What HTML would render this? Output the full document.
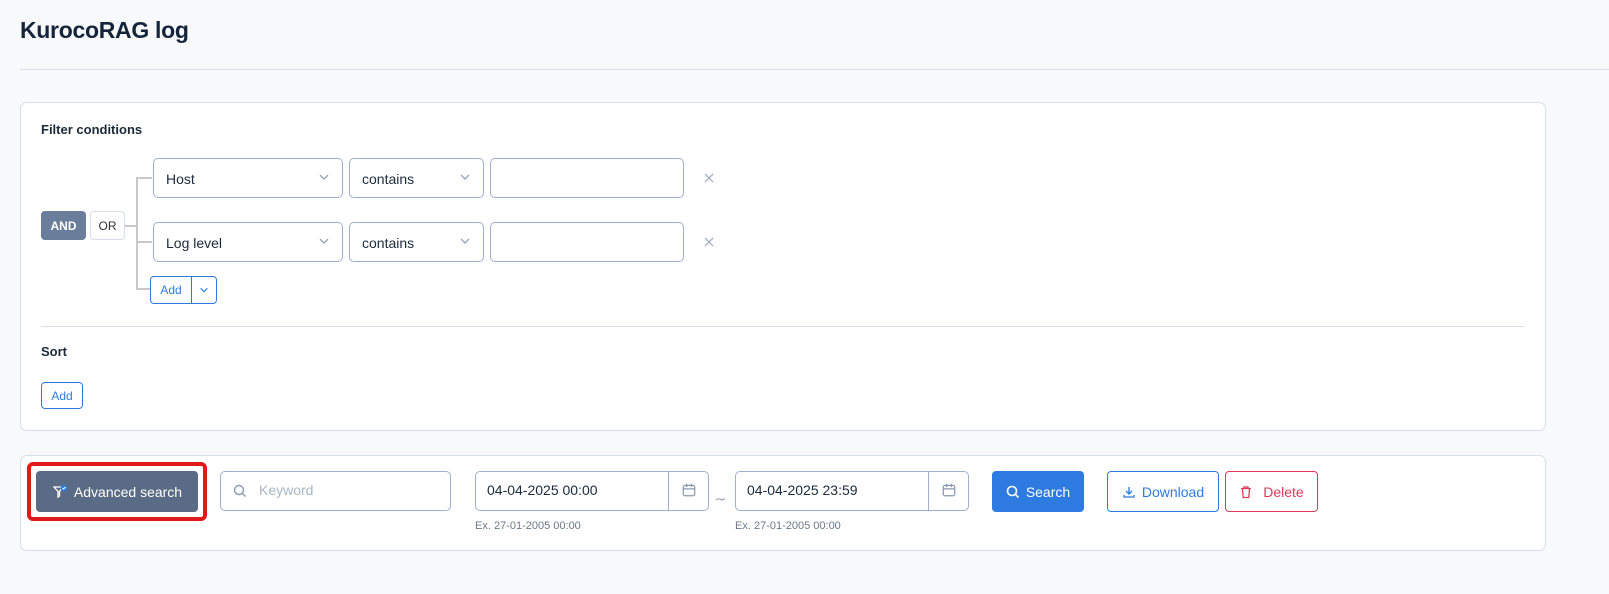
<!DOCTYPE html>
<html><head><meta charset="utf-8"><style>
*{box-sizing:border-box;margin:0;padding:0}
body{width:1609px;height:594px;background:#f8f9fb;font-family:"Liberation Sans",sans-serif;color:#1b2a3a;position:relative;overflow:hidden}
.abs{position:absolute}
h1{position:absolute;left:20px;top:17px;font-size:23px;font-weight:bold;color:#14243a;letter-spacing:-0.3px}
.hr{position:absolute;left:20px;top:69px;width:1589px;height:1px;background:#d7dfea}
.card{position:absolute;left:20px;width:1526px;background:#fff;border:1px solid #d5deea;border-radius:7px}
.lbl{font-size:13px;font-weight:bold;color:#1b2a3a}
.sel{position:absolute;height:40px;border:1px solid #9fb0cc;border-radius:5px;background:#fff;font-size:14px;padding:12px 12px;color:#1b2a3a}
.sel .ch{position:absolute;right:12px;top:12px}
.line{position:absolute;background:#c9c9c9}
.btn{position:absolute;border-radius:4px;font-size:14px;display:flex;align-items:center;justify-content:center;gap:6px}
.hint{position:absolute;font-size:11px;color:#6b7889}
</style></head><body>
<h1>KurocoRAG log</h1>
<div class="hr"></div>

<div class="card" style="top:102px;height:329px"></div>
<div class="abs lbl" style="left:41px;top:122px">Filter conditions</div>

<div class="btn" style="left:41px;top:211px;width:45px;height:29px;background:#6a7d9a;color:#fff;font-size:12px;font-weight:bold">AND</div>
<div class="btn" style="left:90px;top:211px;width:35px;height:29px;background:#fff;border:1px solid #d5deea;color:#333;font-size:12px">OR</div>
<div class="line" style="left:125px;top:225px;width:12px;height:2px"></div>
<div class="line" style="left:136px;top:177px;width:2px;height:113px"></div>
<div class="line" style="left:136px;top:177px;width:16px;height:2px"></div>
<div class="line" style="left:136px;top:241px;width:16px;height:2px"></div>
<div class="line" style="left:136px;top:288px;width:14px;height:2px"></div>

<div class="sel" style="left:153px;top:158px;width:190px">Host<svg class="ch" width="12" height="12" viewBox="0 0 12 12"><path d="M2 4l4 4 4-4" stroke="#8a9ab0" stroke-width="1.2" fill="none"/></svg></div>
<div class="sel" style="left:349px;top:158px;width:135px">contains<svg class="ch" width="12" height="12" viewBox="0 0 12 12"><path d="M2 4l4 4 4-4" stroke="#8a9ab0" stroke-width="1.2" fill="none"/></svg></div>
<div class="sel" style="left:490px;top:158px;width:194px"></div>
<svg class="abs" style="left:704px;top:173px" width="10" height="10" viewBox="0 0 10 10"><path d="M1 1l8 8M9 1l-8 8" stroke="#a7b3c5" stroke-width="1.3"/></svg>

<div class="sel" style="left:153px;top:222px;width:190px">Log level<svg class="ch" width="12" height="12" viewBox="0 0 12 12"><path d="M2 4l4 4 4-4" stroke="#8a9ab0" stroke-width="1.2" fill="none"/></svg></div>
<div class="sel" style="left:349px;top:222px;width:135px">contains<svg class="ch" width="12" height="12" viewBox="0 0 12 12"><path d="M2 4l4 4 4-4" stroke="#8a9ab0" stroke-width="1.2" fill="none"/></svg></div>
<div class="sel" style="left:490px;top:222px;width:194px"></div>
<svg class="abs" style="left:704px;top:237px" width="10" height="10" viewBox="0 0 10 10"><path d="M1 1l8 8M9 1l-8 8" stroke="#a7b3c5" stroke-width="1.3"/></svg>

<div class="abs" style="left:150px;top:276px;width:67px;height:28px;border:1px solid #2d7be0;border-radius:4px;background:#fff;display:flex">
 <div style="width:41px;border-right:1px solid #2d7be0;color:#2d7be0;font-size:12px;display:flex;align-items:center;justify-content:center">Add</div>
 <div style="flex:1;display:flex;align-items:center;justify-content:center"><svg width="10" height="10" viewBox="0 0 12 12"><path d="M2 4l4 4 4-4" stroke="#2d7be0" stroke-width="1.4" fill="none"/></svg></div>
</div>

<div class="abs" style="left:41px;top:326px;width:1483px;height:1px;background:#d5deea"></div>
<div class="abs lbl" style="left:41px;top:344px">Sort</div>
<div class="btn" style="left:41px;top:382px;width:42px;height:27px;border:1px solid #2d7be0;color:#2d7be0;font-size:12px;background:#fff">Add</div>

<div class="card" style="top:455px;height:96px"></div>
<div class="abs" style="left:27px;top:462px;width:180px;height:59px;border:4px solid #e01a1a;border-radius:6px"></div>
<div class="btn" style="left:36px;top:471px;width:162px;height:41px;background:#5a6b85;color:#fff;font-size:14px">
<svg width="16" height="16" viewBox="0 0 16 16"><path d="M2 3h9l-3.5 4.5V12L6 13V7.5z" stroke="#fff" stroke-width="1.3" fill="none"/><circle cx="12" cy="4" r="3.3" fill="#2d7be0"/><path d="M10.5 4l1 1 2-2" stroke="#fff" stroke-width="1" fill="none"/></svg>Advanced search</div>

<div class="abs" style="left:220px;top:471px;width:231px;height:40px;border:1px solid #9fb0cc;border-radius:5px;background:#fff"></div>
<svg class="abs" style="left:233px;top:484px" width="14" height="14" viewBox="0 0 14 14"><circle cx="6" cy="6" r="4.5" stroke="#8a9ab0" stroke-width="1.4" fill="none"/><path d="M9.5 9.5l3 3" stroke="#8a9ab0" stroke-width="1.4"/></svg>
<div class="abs" style="left:259px;top:482px;font-size:14px;color:#a9b6c8">Keyword</div>

<div class="abs" style="left:475px;top:471px;width:234px;height:40px;border:1px solid #9fb0cc;border-radius:5px;background:#fff"></div>
<div class="abs" style="left:668px;top:471px;width:1px;height:40px;background:#9fb0cc"></div>
<div class="abs" style="left:487px;top:482px;font-size:14px">04-04-2025 00:00</div>
<svg class="abs" style="left:681px;top:482px" width="16" height="16" viewBox="0 0 14 14"><rect x="2" y="3" width="10" height="9" rx="1.5" stroke="#8a9ab0" stroke-width="1.1" fill="none"/><path d="M2 6h10M5 1.5v3M9 1.5v3" stroke="#8a9ab0" stroke-width="1.1"/></svg>
<div class="hint" style="left:475px;top:520px">Ex. 27-01-2005 00:00</div>
<div class="abs" style="left:714px;top:490px;font-size:15px;color:#9aa6b8">∼</div>

<div class="abs" style="left:735px;top:471px;width:234px;height:40px;border:1px solid #9fb0cc;border-radius:5px;background:#fff"></div>
<div class="abs" style="left:928px;top:471px;width:1px;height:40px;background:#9fb0cc"></div>
<div class="abs" style="left:747px;top:482px;font-size:14px">04-04-2025 23:59</div>
<svg class="abs" style="left:941px;top:482px" width="16" height="16" viewBox="0 0 14 14"><rect x="2" y="3" width="10" height="9" rx="1.5" stroke="#8a9ab0" stroke-width="1.1" fill="none"/><path d="M2 6h10M5 1.5v3M9 1.5v3" stroke="#8a9ab0" stroke-width="1.1"/></svg>
<div class="hint" style="left:735px;top:520px">Ex. 27-01-2005 00:00</div>

<div class="btn" style="left:992px;top:471px;width:92px;height:41px;background:#2d7be0;color:#fff">
<svg width="14" height="14" viewBox="0 0 14 14"><circle cx="6" cy="6" r="4.5" stroke="#fff" stroke-width="1.6" fill="none"/><path d="M9.5 9.5l3 3" stroke="#fff" stroke-width="1.6"/></svg>Search</div>
<div class="btn" style="left:1107px;top:471px;width:112px;height:41px;border:1px solid #2d7be0;color:#2d7be0;background:#fff">
<svg width="14" height="14" viewBox="0 0 14 14"><path d="M7 2v7M4 6l3 3 3-3M2 10v2h10v-2" stroke="#2d7be0" stroke-width="1.3" fill="none"/></svg>Download</div>
<div class="btn" style="left:1225px;top:471px;width:93px;height:41px;border:1px solid #e0385a;color:#e0385a;background:#fff">
<svg width="14" height="14" viewBox="0 0 14 14"><path d="M2 3.5h10M5 3.5V2h4v1.5M3.5 3.5l.7 9h5.6l.7-9" stroke="#e0385a" stroke-width="1.3" fill="none"/></svg>&nbsp;Delete</div>
</body></html>
